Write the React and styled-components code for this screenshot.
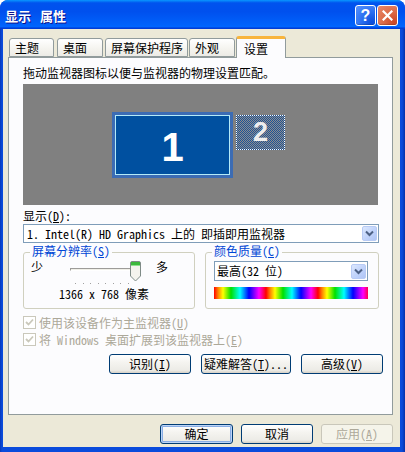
import React from "react";
import styled, { createGlobalStyle } from "styled-components";

const Global = createGlobalStyle`
  html, body { margin: 0; padding: 0; background: #ffffff; }
  body {
    font-family: "Noto Sans Mono CJK SC", "Noto Sans CJK SC", "Liberation Mono", monospace;
    font-size: 12px;
    color: #000;
  }
  * { box-sizing: border-box; }
`;

const Window = styled.div`
  width: 405px;
  height: 452px;
  display: flex;
  flex-direction: column;
  border-radius: 8px 8px 0 0;
  overflow: hidden;
  background: #0a46d6;
`;

const TitleBar = styled.div`
  height: 29px;
  flex: none;
  display: flex;
  align-items: center;
  padding: 2px 7px 0 5px;
  background: linear-gradient(180deg, #0997ff 0%, #0053ee 10%, #0050ee 40%, #0062fb 85%, #0066ff 92%, #003dd7 97%, #003dd7 100%);
`;

const Title = styled.div`
  flex: 1;
  color: #fff;
  font-family: "Noto Sans CJK SC", sans-serif;
  font-weight: 700;
  font-size: 13px;
  word-spacing: 6px;
  text-shadow: 1px 1px #0f1089;
  line-height: 16px;
`;

const CaptionButton = styled.div`
  width: 21px;
  height: 21px;
  margin-left: ${p => p.$gap || 0}px;
  border: 1px solid #fff;
  border-radius: 3px;
  display: flex;
  align-items: center;
  justify-content: center;
  color: #fff;
  font-family: "Liberation Sans", sans-serif;
  font-weight: 700;
  font-size: 16px;
  background: ${p => p.$close
    ? "radial-gradient(circle at 85% 85%, #cc4625 0%, #dc6a46 45%, #e88a6c 100%)"
    : "radial-gradient(circle at 85% 85%, #0a4cdc 0%, #2a6ff0 45%, #5a94ff 100%)"};
  box-shadow: inset 0 -1px 1px rgba(0,0,0,0.2);
`;

const Frame = styled.div`
  flex: 1;
  display: flex;
  padding: 0 5px 5px 3px;
  background: linear-gradient(90deg, #0838b8 0, #0a4bdc 2px, #0a4bdc calc(100% - 3px), #0631a8 100%);
`;

const Client = styled.div`
  flex: 1;
  display: flex;
  flex-direction: column;
  background: #ece9d8;
  padding: 7px 7px 3px 5px;
`;

const TabRow = styled.div`
  display: flex;
  align-items: flex-end;
  height: 21px;
  position: relative;
  z-index: 2;
`;

const Tab = styled.div`
  width: ${p => p.$w}px;
  margin-left: ${p => p.$ml}px;
  height: ${p => (p.$active ? 22 : 19)}px;
  margin-bottom: ${p => (p.$active ? -1 : 0)}px;
  padding-left: ${p => (p.$active ? 7 : 5)}px;
  display: flex;
  align-items: center;
  border: 1px solid #919b9c;
  border-bottom: ${p => (p.$active ? "none" : "1px solid #919b9c")};
  border-radius: 3px 3px 0 0;
  line-height: 14px;
  background: ${p => (p.$active ? "#fcfcfe" : "linear-gradient(180deg, #ffffff 0%, #f4f3ee 60%, #ecebe6 100%)")};
  border-top: ${p => (p.$active ? "3px solid #f8b43c" : "1px solid #919b9c")};
`;

const Panel = styled.div`
  height: 358px;
  flex: none;
  border: 1px solid #919b9c;
  background: #fcfcfe;
  padding: 8px 13px 0 14px;
  display: flex;
  flex-direction: column;
`;

const Line = styled.div`
  line-height: 14px;
  height: 14px;
  margin-top: ${p => p.$mt || 0}px;
  white-space: nowrap;
`;

const U = styled.span`
  text-decoration: underline;
`;

const Canvas = styled.div`
  position: relative;
  height: 121px;
  margin-top: 4px;
  margin-right: 1px;
  background: #808080;
`;

const MonitorOne = styled.div`
  position: absolute;
  left: 89px;
  top: 28px;
  width: 121px;
  height: 66px;
  border: 3px solid #3c6cb4;
  background: #0050a0;
  box-shadow: inset 0 0 0 1px #b4eaf8;
  display: flex;
  align-items: center;
  justify-content: center;
  color: #fff;
  font-family: "Liberation Sans", sans-serif;
  font-weight: 700;
  font-size: 40px;
  line-height: 40px;
  padding-top: 4px;
`;

const MonitorTwo = styled.div`
  position: absolute;
  left: 213px;
  top: 31px;
  width: 49px;
  height: 35px;
  border: 1px dotted #ffffff;
  background: repeating-conic-gradient(#1f5396 0 25%, #8e8e8e 0 50%) 0 0 / 2px 2px;
  display: flex;
  align-items: center;
  justify-content: center;
  color: #eeeeee;
  font-family: "Liberation Sans", sans-serif;
  font-weight: 700;
  font-size: 27px;
  line-height: 27px;
`;

const Select = styled.div`
  display: flex;
  align-items: center;
  height: ${p => p.$h || 19}px;
  width: ${p => (p.$w ? `${p.$w}px` : "auto")};
  margin-top: ${p => p.$mt || 0}px;
  border: 1px solid #7f9db9;
  background: #fff;
  padding: 0 1px 0 ${p => p.$pl || 3}px;
`;

const SelectText = styled.div`
  flex: 1;
  line-height: 14px;
  white-space: nowrap;
`;

const DropButton = styled.div`
  width: 15px;
  height: 15px;
  border-radius: 2px;
  border: 1px solid #b8cbf5;
  background: linear-gradient(135deg, #dce8fe 0%, #c2d4fb 50%, #afc5f6 100%);
  display: flex;
  align-items: center;
  justify-content: center;
`;

const GroupRow = styled.div`
  display: grid;
  grid-template-columns: 172px 1fr;
  column-gap: 10px;
  margin-top: 9px;
`;

const GroupBox = styled.div`
  position: relative;
  height: 57px;
  border: 1px solid #d0d0bf;
  border-radius: 3px;
  padding: ${p => p.$pt}px 9px 0 ${p => p.$pl}px;
`;

const Legend = styled.span`
  position: absolute;
  top: -9px;
  left: 6px;
  padding: 0 2px;
  line-height: 13px;
  height: 13px;
  background: #fcfcfe;
  color: #0046d5;
  white-space: nowrap;
`;

const SliderRow = styled.div`
  display: flex;
  align-items: flex-start;
`;

const SliderLabel = styled.span`
  line-height: 14px;
  width: ${p => p.$w}px;
  margin-left: ${p => p.$ml || 0}px;
  flex: none;
`;

const Slider = styled.div`
  position: relative;
  width: 76px;
  height: 27px;
  flex: none;
`;

const Track = styled.div`
  position: absolute;
  left: 2px;
  top: 8px;
  width: 64px;
  height: 3px;
  border-top: 1px solid #9d9c99;
  border-left: 1px solid #9d9c99;
  border-bottom: 1px solid #ffffff;
  border-right: 1px solid #ffffff;
  background: #f0efe8;
`;

const Thumb = styled.svg`
  position: absolute;
  left: 62px;
  top: 1px;
`;

const Ticks = styled.div`
  position: absolute;
  left: 7px;
  top: 23px;
  width: 54px;
  display: flex;
  justify-content: space-between;
`;

const Tick = styled.span`
  width: 1px;
  height: 1px;
  background: #a0a0a0;
`;

const ResText = styled.div`
  text-align: center;
  line-height: 14px;
  padding-right: 8px;
`;

const ColorBar = styled.div`
  width: 154px;
  height: 12px;
  margin-top: 6px;
  background: repeating-linear-gradient(90deg, #ff0000 0, #ff8000 4px, #ffff00 9px, #00e000 17px, #00ffff 26px, #0000ff 35px, #8000ff 40px, #ff00ff 45px, #ff0000 52px);
`;

const CheckRow = styled.div`
  display: flex;
  align-items: center;
  height: 14px;
  margin-top: ${p => p.$mt}px;
  color: #aca899;
  white-space: nowrap;
`;

const CheckBox = styled.span`
  width: 13px;
  height: 13px;
  flex: none;
  margin-right: 3px;
  border: 1px solid #cac8bb;
  background: #ffffff;
  display: flex;
  align-items: center;
  justify-content: center;
`;

const ButtonRow = styled.div`
  display: flex;
  justify-content: flex-end;
  gap: ${p => p.$gap}px;
  margin-top: ${p => p.$mt || 0}px;
  margin-right: ${p => p.$mr || 0}px;
`;

const Button = styled.div`
  width: ${p => p.$w}px;
  height: 20px;
  display: flex;
  align-items: center;
  justify-content: center;
  border: 1px solid ${p => (p.$disabled ? "#c9c7ba" : "#003c74")};
  border-radius: 3px;
  color: ${p => (p.$disabled ? "#aca899" : "#000")};
  line-height: 14px;
  white-space: nowrap;
  background: ${p => (p.$disabled ? "#f5f4ea" : "linear-gradient(180deg, #ffffff 0%, #f5f4f0 40%, #ecebe6 85%, #d6d0c5 100%)")};
  box-shadow: ${p => (p.$default
    ? "inset 0 0 0 1px #bcd4f6, inset 0 0 0 2px #89ade4"
    : "none")};
`;

const Chevron = () => (
  <svg width="9" height="7" viewBox="0 0 9 7">
    <path d="M1 1.5 L4.5 5 L8 1.5" fill="none" stroke="#4d6185" strokeWidth="2" />
  </svg>
);

const Check = () => (
  <svg width="9" height="9" viewBox="0 0 9 9">
    <path d="M1 4 L3.5 6.5 L8 1.5" fill="none" stroke="#cac8bb" strokeWidth="1.8" />
  </svg>
);

const tabs = [
  { label: "主题", w: 45, ml: 1 },
  { label: "桌面", w: 46, ml: 3 },
  { label: "屏幕保护程序", w: 83, ml: 2 },
  { label: "外观", w: 46, ml: 1 },
  { label: "设置", w: 50, ml: 1, active: true },
];

export default function App() {
  return (
    <>
      <Global />
      <Window>
        <TitleBar>
          <Title>显示 属性</Title>
          <CaptionButton>?</CaptionButton>
          <CaptionButton $close $gap={1}>
            <svg width="11" height="11" viewBox="0 0 11 11">
              <path d="M1.5 1.5 L9.5 9.5 M9.5 1.5 L1.5 9.5" stroke="#fff" strokeWidth="2.2" strokeLinecap="square" />
            </svg>
          </CaptionButton>
        </TitleBar>
        <Frame>
          <Client>
            <TabRow>
              {tabs.map(t => (
                <Tab key={t.label} $w={t.w} $ml={t.ml} $active={t.active}>{t.label}</Tab>
              ))}
            </TabRow>
            <Panel>
              <Line>拖动监视器图标以便与监视器的物理设置匹配。</Line>
              <Canvas>
                <MonitorOne>1</MonitorOne>
                <MonitorTwo>2</MonitorTwo>
              </Canvas>
              <Line $mt={4}>显示(<U>D</U>):</Line>
              <Select $mt={1}>
                <SelectText>1. Intel(R) HD Graphics 上的 即插即用监视器</SelectText>
                <DropButton><Chevron /></DropButton>
              </Select>
              <GroupRow>
                <GroupBox $pt={7} $pl={7}>
                  <Legend>屏幕分辨率(<U>S</U>)</Legend>
                  <SliderRow>
                    <SliderLabel $w={37}>少</SliderLabel>
                    <Slider>
                      <Track />
                      <Thumb width="11" height="21" viewBox="0 0 11 21">
                        <path d="M0.5 2 Q0.5 0.5 2 0.5 H9 Q10.5 0.5 10.5 2 V15 L5.5 20 L0.5 15 Z" fill="#f4f3ee" stroke="#7f8b87" />
                        <rect x="1" y="1" width="9" height="3" fill="#3cb83c" />
                        <rect x="1" y="4" width="9" height="1" fill="#8ee08e" />
                      </Thumb>
                      <Ticks>
                        {Array.from({ length: 8 }).map((_, i) => <Tick key={i} />)}
                      </Ticks>
                    </Slider>
                    <SliderLabel $w={14} $ml={12}>多</SliderLabel>
                  </SliderRow>
                  <ResText>1366 x 768 像素</ResText>
                </GroupBox>
                <GroupBox $pt={8} $pl={8}>
                  <Legend>颜色质量(<U>C</U>)</Legend>
                  <Select $w={154} $h={20} $pl={2}>
                    <SelectText>最高(32 位)</SelectText>
                    <DropButton><Chevron /></DropButton>
                  </Select>
                  <ColorBar />
                </GroupBox>
              </GroupRow>
              <CheckRow $mt={6}>
                <CheckBox><Check /></CheckBox>
                使用该设备作为主监视器(<U>U</U>)
              </CheckRow>
              <CheckRow $mt={3}>
                <CheckBox><Check /></CheckBox>
                将 Windows 桌面扩展到该监视器上(<U>E</U>)
              </CheckRow>
              <ButtonRow $gap={10} $mt={8} $mr={-4}>
                <Button $w={82}>识别(<U>I</U>)</Button>
                <Button $w={90}>疑难解答(<U>T</U>)...</Button>
                <Button $w={82}>高级(<U>V</U>)</Button>
              </ButtonRow>
            </Panel>
            <ButtonRow $gap={8} $mt={9}>
              <Button $w={73} $default>确定</Button>
              <Button $w={72}>取消</Button>
              <Button $w={72} $disabled>应用(<U>A</U>)</Button>
            </ButtonRow>
          </Client>
        </Frame>
      </Window>
    </>
  );
}
